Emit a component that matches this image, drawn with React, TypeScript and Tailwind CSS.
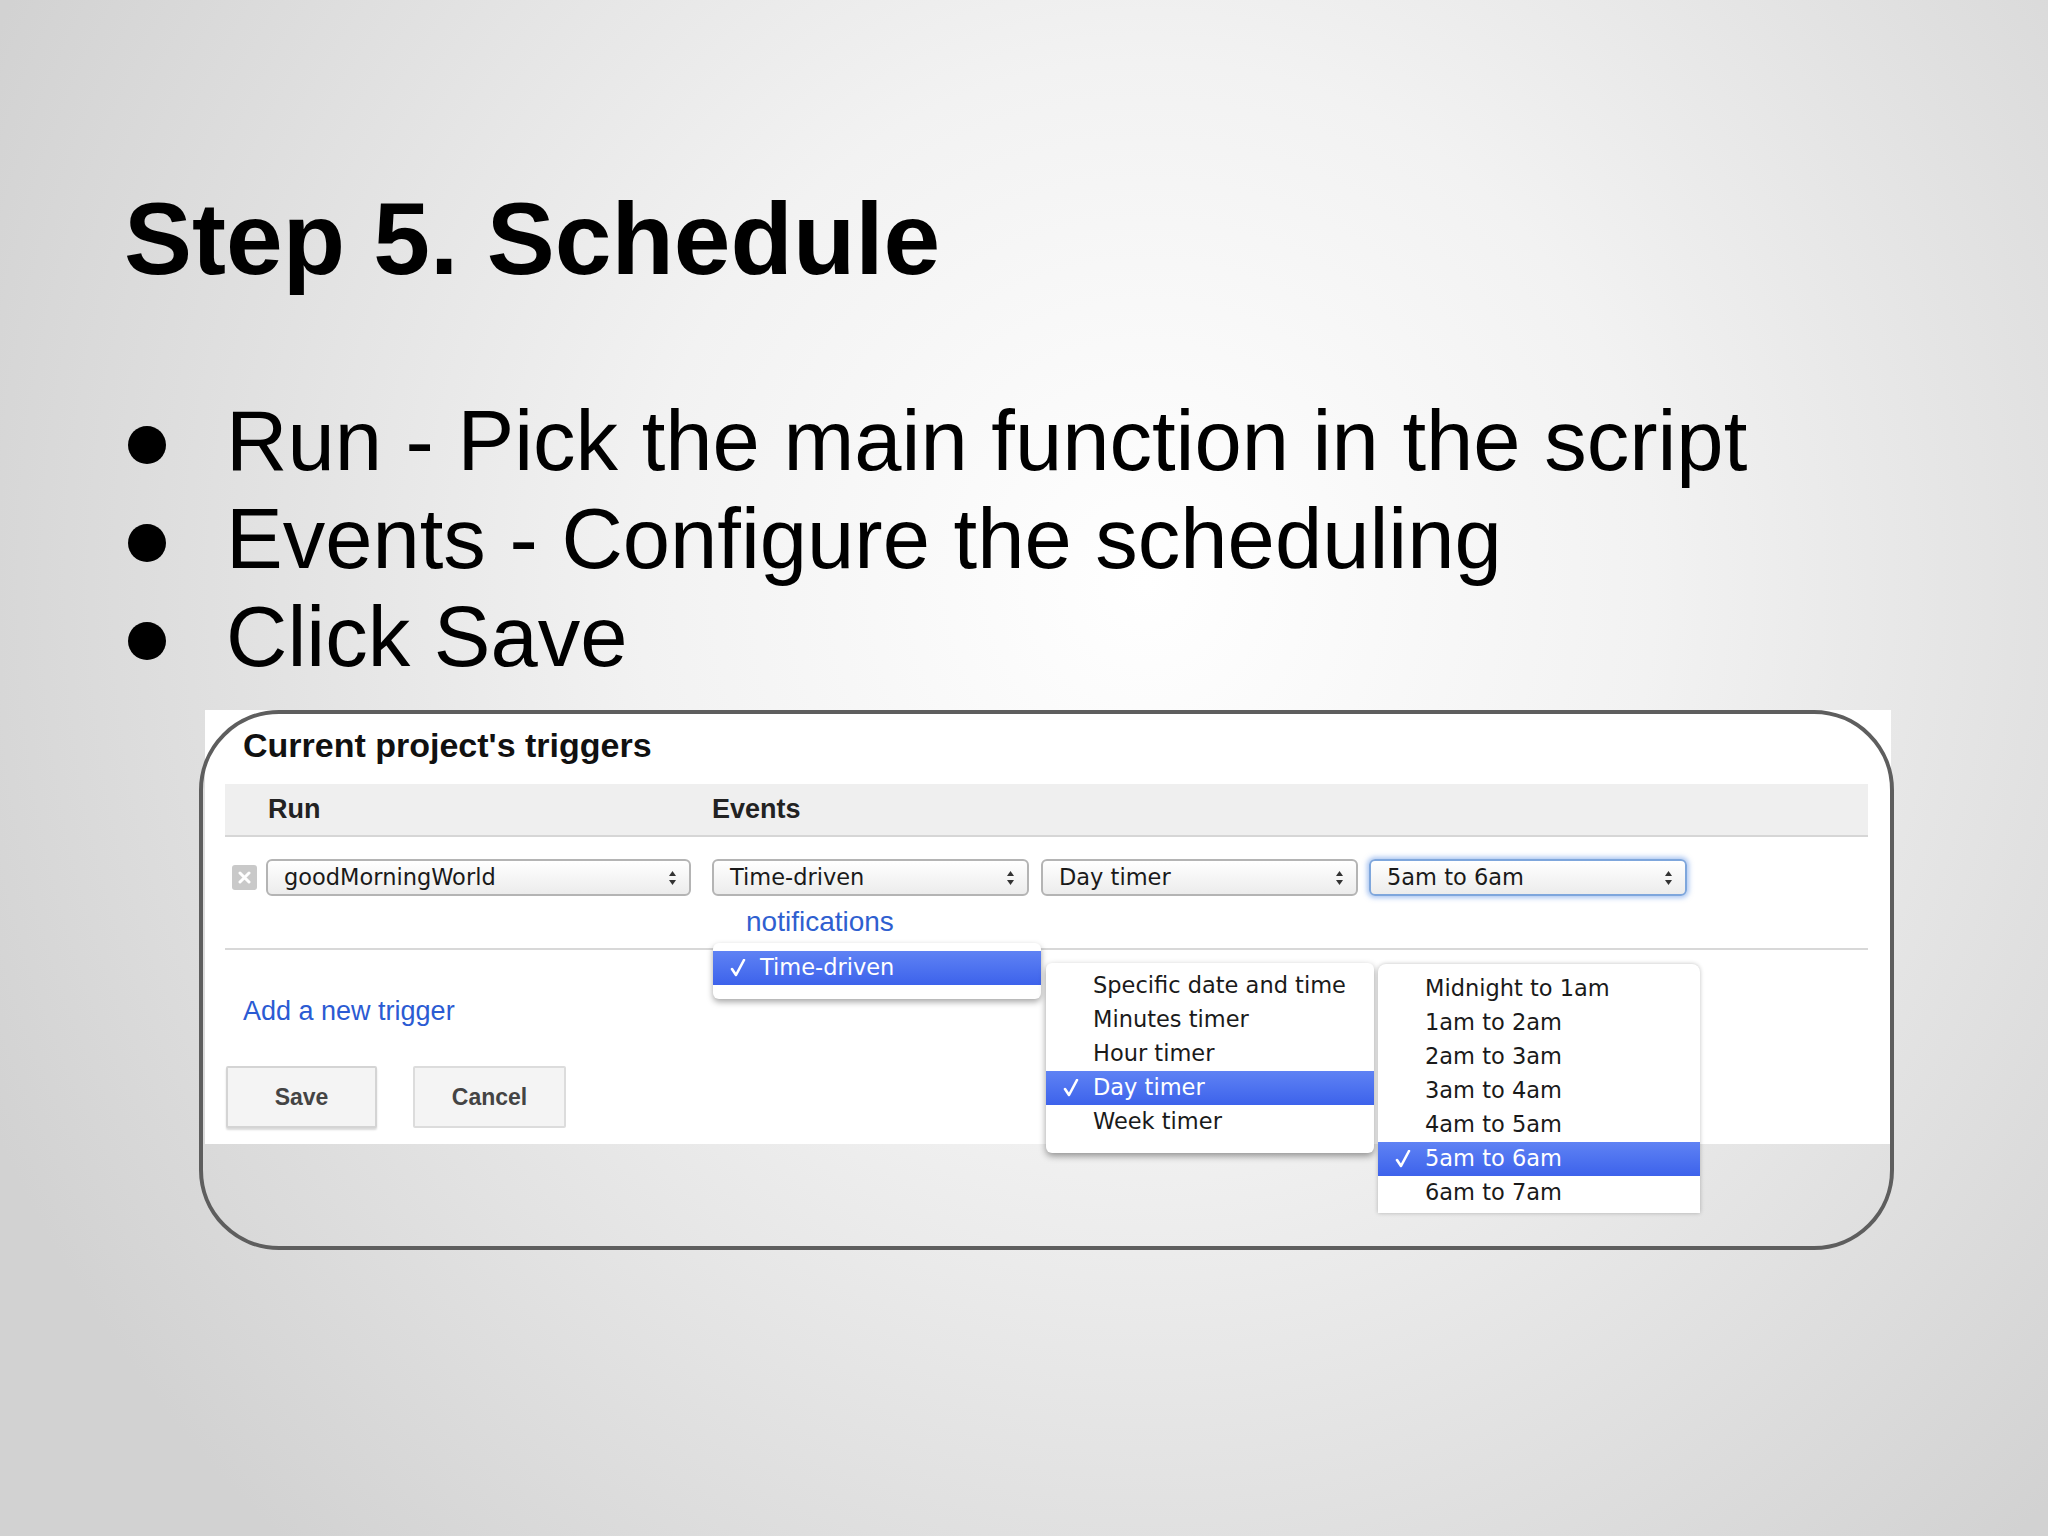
import React from "react";

const ui = "font-['DejaVu_Sans',sans-serif]";
const arial = "font-['Liberation_Sans',Arial,sans-serif]";

function Arrows() {
  return (
    <svg width="9" height="16" viewBox="0 0 9 16" className="shrink-0">
      <path d="M4.5 1 L8 6 L1 6 Z" fill="#333" />
      <path d="M4.5 15 L8 10 L1 10 Z" fill="#333" />
    </svg>
  );
}

function Check({ color = "#fff" }: { color?: string }) {
  return (
    <svg width="16" height="18" viewBox="0 0 16 18">
      <path d="M2 10 L6 16 L14 1" fill="none" stroke={color} strokeWidth="2.6" strokeLinecap="round" strokeLinejoin="round" />
    </svg>
  );
}

function Select({ label, width, focused }: { label: string; width: string; focused?: boolean }) {
  return (
    <div
      className={`${width} h-[37px] flex items-center justify-between pl-[16px] pr-[12px] rounded-[6px] bg-gradient-to-b from-white to-[#ececec] text-[22.5px] text-[#1a1a1a] ${ui} ${
        focused
          ? "border-2 border-[#7ea6dc] shadow-[0_0_5px_2px_rgba(100,150,230,0.55)]"
          : "border-2 border-[#b4b4b4]"
      }`}
    >
      <span>{label}</span>
      <Arrows />
    </div>
  );
}

function MenuRow({ label, selected }: { label: string; selected?: boolean }) {
  return (
    <div
      className={`h-[34px] flex items-center text-[22.5px] ${ui} ${
        selected ? "bg-gradient-to-b from-[#5f82f4] to-[#3d62eb] text-white" : "text-[#1a1a1a]"
      }`}
    >
      <span className="w-[47px] flex justify-center pl-[2px]">{selected ? <Check /> : null}</span>
      <span>{label}</span>
    </div>
  );
}

export default function App() {
  const bullets = [
    "Run - Pick the main function in the script",
    "Events - Configure the scheduling",
    "Click Save",
  ];
  const timers = ["Specific date and time", "Minutes timer", "Hour timer", "Day timer", "Week timer"];
  const hours = ["Midnight to 1am", "1am to 2am", "2am to 3am", "3am to 4am", "4am to 5am", "5am to 6am", "6am to 7am"];

  return (
    <div className="w-[2048px] h-[1536px] overflow-hidden bg-[radial-gradient(ellipse_62%_85%_at_56%_38%,#ffffff_0%,#f2f2f2_40%,#d2d2d2_100%)] text-black">
      {/* slide title */}
      <h1 className={`pt-[188px] pl-[124px] text-[102px] leading-[102px] font-bold ${arial}`}>Step 5. Schedule</h1>

      {/* bullets */}
      <ul className={`mt-[102px] pl-[128px] ${arial}`}>
        {bullets.map((b) => (
          <li key={b} className="flex items-center h-[98px] text-[85px] leading-[98px]">
            <span className="w-[98px] shrink-0 flex items-center">
              <span className="w-[38px] h-[38px] rounded-full bg-black mt-[8px]" />
            </span>
            <span>{b}</span>
          </li>
        ))}
      </ul>

      {/* screenshot with rounded frame */}
      <div className="relative ml-[199px] mt-[24px] w-[1695px] h-[540px]">
        <div className="relative ml-[6px] mt-[5px] w-[1686px] h-[434px] bg-white">
          <div className={`absolute left-[38px] top-[18px] text-[34px] leading-[34px] font-bold text-[#111] ${arial}`}>
            Current project's triggers
          </div>

          <div className="pt-[74px] pl-[20px] w-[1663px]">
            {/* header */}
            <div className={`h-[53px] bg-[#efefef] border-b-2 border-[#d6d6d6] flex items-center text-[27px] font-bold text-[#222] ${arial}`}>
              <span className="w-[487px] pl-[43px]">Run</span>
              <span>Events</span>
            </div>

            {/* trigger row */}
            <div className="mt-[22px] flex items-center">
              <div className="ml-[7px] w-[25px] h-[25px] rounded-[3px] bg-[#c9c9c9] flex items-center justify-center">
                <svg width="13" height="13" viewBox="0 0 13 13">
                  <path d="M2 2 L11 11 M11 2 L2 11" stroke="#fff" strokeWidth="3" strokeLinecap="round" />
                </svg>
              </div>
              <div className="ml-[9px]">
                <Select label="goodMorningWorld" width="w-[425px]" />
              </div>
              <div className="ml-[21px]">
                <Select label="Time-driven" width="w-[317px]" />
              </div>
              <div className="ml-[12px]">
                <Select label="Day timer" width="w-[317px]" />
              </div>
              <div className="ml-[11px]">
                <Select label="5am to 6am" width="w-[318px]" focused />
              </div>
            </div>

            <div className={`mt-[9px] ml-[521px] text-[28px] leading-[34px] text-[#2f5fd0] ${arial}`}>notifications</div>

            <div className="mt-[9px] h-[2px] bg-[#d8d8d8]" />

            <div className={`mt-[44px] ml-[18px] text-[27px] leading-[34px] text-[#2b5bd3] ${arial}`}>Add a new trigger</div>

            <div className={`mt-[38px] flex gap-[36px] text-[23px] font-bold text-[#444] ${arial}`}>
              <button className="ml-[1px] w-[151px] h-[62px] bg-[#f4f4f4] border-2 border-[#d4d4d4] shadow-[0_2px_2px_rgba(0,0,0,0.15)] rounded-[2px]">
                Save
              </button>
              <button className="w-[153px] h-[62px] bg-[#f4f4f4] border-2 border-[#dcdcdc] rounded-[2px]">Cancel</button>
            </div>
          </div>

          {/* open menu: events */}
          <div className="absolute left-[508px] top-[233px] w-[328px] h-[56px] pt-[8px] bg-white rounded-[6px] shadow-[0_3px_6px_rgba(0,0,0,0.35)]">
            <MenuRow label="Time-driven" selected />
          </div>

          {/* open menu: timer kind */}
          <div className="absolute left-[841px] top-[253px] w-[328px] h-[190px] pt-[6px] bg-white rounded-[6px] shadow-[0_3px_7px_rgba(0,0,0,0.4)]">
            {timers.map((t) => (
              <MenuRow key={t} label={t} selected={t === "Day timer"} />
            ))}
          </div>

          {/* open menu: hour */}
          <div className="absolute left-[1173px] top-[254px] w-[322px] h-[249px] pt-[8px] bg-white rounded-t-[8px] overflow-hidden shadow-[0_0_4px_rgba(0,0,0,0.25)]">
            {hours.map((h) => (
              <MenuRow key={h} label={h} selected={h === "5am to 6am"} />
            ))}
          </div>
        </div>

        {/* frame drawn over the screenshot */}
        <div className="absolute inset-0 border-[4px] border-[#5e5e5e] rounded-[80px] pointer-events-none" />
      </div>
    </div>
  );
}
